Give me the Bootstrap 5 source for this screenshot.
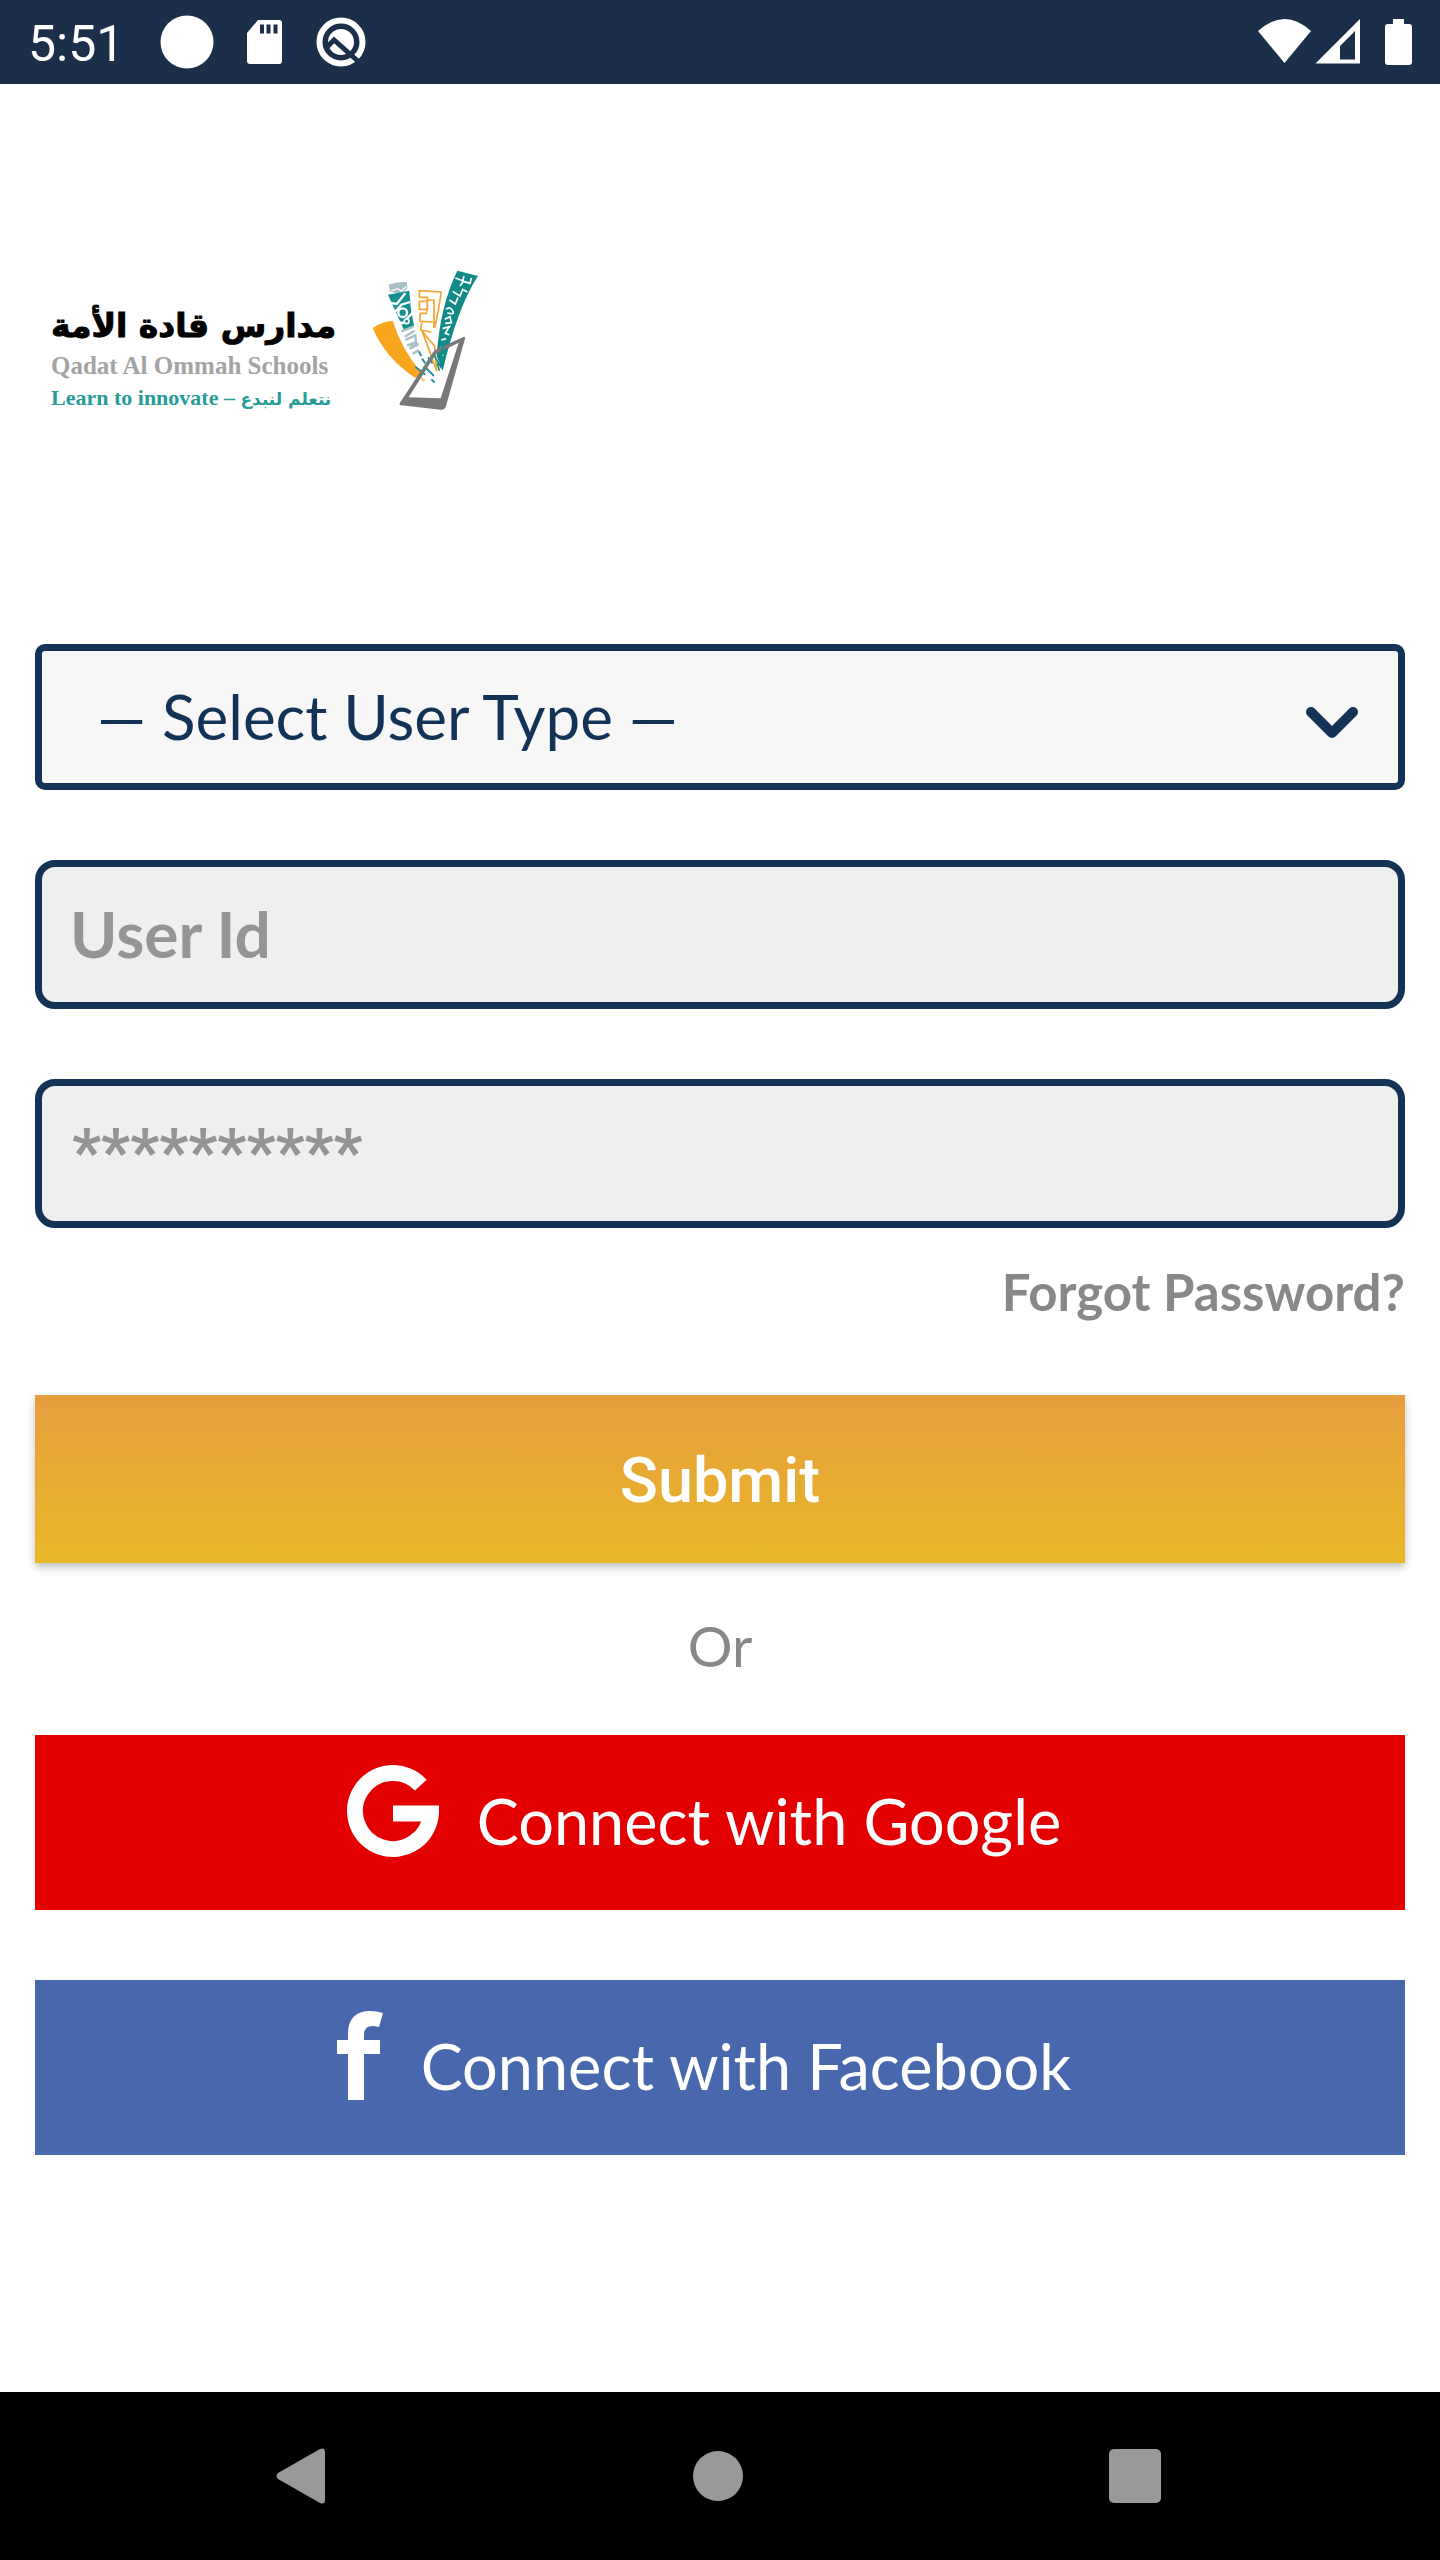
<!DOCTYPE html>
<html lang="en">
<head>
<meta charset="utf-8">
<meta name="viewport" content="width=device-width, initial-scale=1">
<title>Qadat Al Ommah Schools</title>
<link href="https://cdn.jsdelivr.net/npm/bootstrap@5.3.0/dist/css/bootstrap.min.css" rel="stylesheet">
<style>
  body { font-family: Lato, "Noto Sans", sans-serif; background: #fff; }
  .status-bar { height: 84px; background: #1b2f4a; color: #fff; padding: 0 28px; }
  .clock { font: 400 50px/60px Roboto, sans-serif; padding-top: 4px; }
  .login { padding: 166px 35px 96px; }
  .brand { padding-left: 16px; gap: 18px; margin-bottom: 214px; }
  .brand-text { padding-top: 36px; }
  .brand-ar { font: 700 33px/48px "DejaVu Sans", sans-serif; color: #000; -webkit-text-stroke: 1px #000; }
  .brand-en { font: 700 25px/32px "Liberation Serif", serif; color: #a3a3a3; }
  .brand-tag { font: 700 22px/32px "Liberation Serif", serif; color: #279c98; }
  .brand-tag span { font: 700 17px/32px "DejaVu Sans", sans-serif; }
  .field { border: 7px solid #123355; font-size: 64px; line-height: 80px; color: #8f8f8f; background-color: #efefef; }
  .field::placeholder { color: #959595; opacity: 1; }
  .field-select { height: 146px; border-radius: 10px; padding: 0 120px 2px 55px; font-size: 62px; color: #123355; background-color: #f7f7f7;
    background-image: url("data:image/svg+xml,%3Csvg xmlns='http://www.w3.org/2000/svg' viewBox='0 0 52 32'%3E%3Cpath d='M5 5l21 21L47 5' fill='none' stroke='%23123355' stroke-width='10' stroke-linecap='round' stroke-linejoin='round'/%3E%3C/svg%3E");
    background-size: 52px 32px; background-position: right 40px top 56px; }
  .field-text { height: 149px; margin-top: 70px; border-radius: 20px; padding: 0 28px 2px; font-weight: 700; }
  .field-secret { font-family: Roboto, sans-serif; padding-left: 30px; }
  .forgot-row { margin: 34px 0 73px; }
  .forgot { font-size: 51px; line-height: 60px; font-weight: 700; color: #888; }
  .action { border: 0; border-radius: 0; color: #fff; font-size: 63px; line-height: 80px; }
  .action-submit { height: 168px; padding: 4px 0 0; font-family: Roboto, sans-serif; font-weight: 500; background: linear-gradient(#e69e3e, #e9b728); box-shadow: 0 4px 8px rgba(0,0,0,.25); }
  .action-social { height: 175px; padding: 0 32px 4px 0; gap: 38px; }
  .action-social svg { margin-bottom: 20px; }
  .google { background: #e30000; }
  .facebook { background: #4868ae; margin-top: 70px; }
  .divider-text { font-size: 56px; line-height: 64px; color: #888; margin: 51px 0 57px; }
  .nav-keys { height: 168px; background: #000; padding: 0 250px 0 246px; }
  .nav-keys button { background: none; border: 0; padding: 0; line-height: 0; width: 110px; }
</style>
</head>
<body>
<div class="min-vh-100 d-flex flex-column">
  <header class="status-bar d-flex align-items-center justify-content-between">
    <div class="d-flex align-items-center">
      <span class="clock">5:51</span>
      <svg class="ms-4" width="270" height="84" viewBox="148 0 270 84" fill="#fff" aria-hidden="true">
        <circle cx="187" cy="42" r="26.500"/>
        <path d="M258 20h21q3 0 3 3v38q0 3-3 3h-29q-3 0-3-3V33z"/>
        <path d="M260 24.500h4v9h-4zM266.500 24.500h4v9h-4zM273.500 24.500h4v9h-4z" fill="#1b2f4a"/>
        <circle cx="341" cy="42" r="21.500" fill="none" stroke="#fff" stroke-width="6"/>
        <circle cx="341" cy="42" r="13"/>
        <path d="M326 48l8-8 26 23" fill="none" stroke="#1b2f4a" stroke-width="5"/>
      </svg>
    </div>
    <svg width="156" height="84" viewBox="1256 0 156 84" fill="#fff" aria-hidden="true">
      <path d="M1258 31q26.500-24 53 0l-26.500 32z"/>
      <path d="M1360 19v44.500h-44.500zM1355 31l-15 15v13.500h15z" fill-rule="evenodd"/>
      <path d="M1393 19h11v5h5q3 0 3 3v35q0 3-3 3h-21q-3 0-3-3V27q0-3 3-3h5z"/>
    </svg>
  </header>

  <main class="login flex-grow-1">
    <div class="brand d-flex align-items-center">
      <div class="brand-text text-nowrap">
        <div class="brand-ar" lang="ar" dir="rtl">مدارس قادة الأمة</div>
        <div class="brand-en">Qadat Al Ommah Schools</div>
        <div class="brand-tag">Learn to innovate – <span lang="ar" dir="rtl">نتعلم لنبدع</span></div>
      </div>
      <svg width="140" height="180" viewBox="0 0 420 540" role="img" aria-label="School emblem">
        <path d="M56 234q28-20 60-22 28 90 90 160l-22 12q-90-60-128-150z" fill="#f9a61f"/>
        <path d="M190 372l24 18-6 6z" fill="#fbc76f"/>
        <path d="M104 104q24-10 54-8l2 18-18 20-34-10z" fill="#a9bfc6"/>
        <path d="M112 122l20-6 10 8 14-14" fill="none" stroke="#fff" stroke-width="4"/>
        <path d="M102 134l64-12 4 50 10 56-30 12z" fill="#16908f"/>
        <path d="M104 158l24 4 26-32M120 190l22-26 26-8M126 212l20 8 30-32" fill="none" stroke="#fff" stroke-width="7"/>
        <circle cx="146" cy="188" r="13" fill="#16908f" stroke="#fff" stroke-width="7"/>
        <circle cx="158" cy="214" r="7" fill="#16908f" stroke="#fff" stroke-width="5"/>
        <path d="M142 244l36-14M152 260l30-18M154 270l30-14 2 20-26 10 34-4M166 296l26-12M176 312l18-12" fill="none" stroke="#a9bfc6" stroke-width="7"/>
        <path d="M194 304l8 14M204 326l10 14M222 322l14 18M184 350l30 24M210 348l30 30M232 388l10 10" stroke="#2a8fa0" stroke-width="6" fill="none"/>
        <path d="M240 234v-84h-20v28h-24v-24h24v-12h-24v-20l66 4q-8 56-20 108M198 190v24l38 2M198 190h20v-10M204 214l-4 26 32 6M204 242l44 120-6-74-28-32z" fill="none" stroke="#f5a331" stroke-width="5" stroke-linejoin="round"/>
        <path d="M310 62l62 16q-60 90-106 284l-18-44q10-150 62-256z" fill="#128a88"/>
        <path d="M304 84l22 8 4-14M318 108l10-14 20 6 4-16M296 124l22 14 8-20 14 8M286 150l18 12 8-20M276 178q12-10 20 4t-16 6M272 208l16-8 4 18-18 2M266 236l20-6-12 20 12 4M262 270l14-4M260 292l10 4M262 318l6-4" fill="none" stroke="#fff" stroke-width="5"/>
        <path d="M236 308q4-6 12-10l80-37q6-2 5 5l-57 202q-3 12-16 11l-118-13q-8-1-4-8zM246 312L164 442l96 3 54-167z" fill="#77787a" fill-rule="evenodd"/>
        <path d="M240 316L260 350l6-62M250 340l6 22" stroke="#128a88" stroke-width="5" fill="none"/>
      </svg>
    </div>

    <form>
      <select class="form-select field field-select" aria-label="User type"><option>— Select User Type —</option></select>
      <input class="form-control field field-text" type="text" placeholder="User Id" aria-label="User Id">
      <input class="form-control field field-text field-secret" type="password" placeholder="**********" aria-label="Password">

      <div class="forgot-row d-flex justify-content-end"><a class="forgot text-decoration-none" href="#">Forgot Password?</a></div>

      <button class="btn action action-submit w-100" type="submit">Submit</button>
      <div class="divider-text text-center">Or</div>

      <button class="btn action action-social google w-100 d-flex align-items-center justify-content-center" type="button">
        <svg width="92" height="92" viewBox="0 0 92 92" aria-hidden="true"><path d="M73.800 20.100A38 38 0 1 0 83.900 48.500H46" fill="none" stroke="#fff" stroke-width="16"/></svg>
        Connect with Google
      </button>
      <button class="btn action action-social facebook w-100 d-flex align-items-center justify-content-center" type="button">
        <svg width="46" height="89" viewBox="0 0 46 89" aria-hidden="true"><path d="M11 89V43H0V29h11v-7C11 8 19 0 33 0q7 0 13 2l-4 14q-15-4-15 8v5h16v14H27v46z" fill="#fff"/></svg>
        Connect with Facebook
      </button>
    </form>
  </main>

  <nav class="nav-keys d-flex align-items-center justify-content-between" aria-label="System keys">
    <button type="button" aria-label="Back"><svg width="50" height="56" viewBox="0 0 50 56"><path d="M2 25L44 1q5-2 5 3v48q0 5-5 3L2 31q-3-3 0-6z" fill="#999"/></svg></button>
    <button type="button" aria-label="Home"><svg width="52" height="52" viewBox="0 0 52 52"><circle cx="26" cy="26" r="25" fill="#999"/></svg></button>
    <button type="button" aria-label="Recent apps"><svg width="52" height="54" viewBox="0 0 52 54"><rect width="52" height="54" rx="5" fill="#999"/></svg></button>
  </nav>
</div>
<script src="https://cdn.jsdelivr.net/npm/bootstrap@5.3.0/dist/js/bootstrap.bundle.min.js"></script>
</body>
</html>
